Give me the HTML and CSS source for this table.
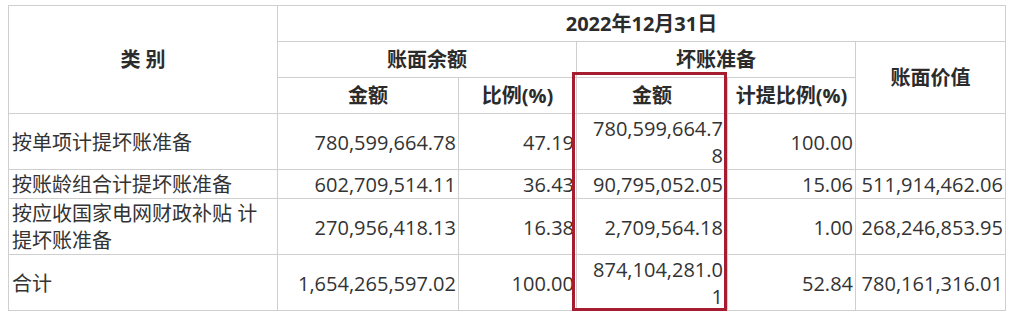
FILE: index.html
```html
<!DOCTYPE html>
<html lang="zh-CN">
<head>
    <meta charset="UTF-8">
    <meta name="viewport" content="width=device-width, initial-scale=1.0">
    <title>坏账准备</title>
    <link rel="stylesheet" href="styles.css">
</head>
<body>
    <div class="sheet">
        <table class="report">
            <colgroup>
                <col class="c-name">
                <col class="c-amt">
                <col class="c-pct">
                <col class="c-bad">
                <col class="c-rate">
                <col class="c-book">
            </colgroup>
            <thead>
                <tr>
                    <th rowspan="3">类 别</th>
                    <th colspan="5">2022年12月31日</th>
                </tr>
                <tr>
                    <th colspan="2">账面余额</th>
                    <th colspan="2">坏账准备</th>
                    <th rowspan="2">账面价值</th>
                </tr>
                <tr>
                    <th>金额</th>
                    <th>比例(%)</th>
                    <th>金额</th>
                    <th>计提比例(%)</th>
                </tr>
            </thead>
            <tbody>
                <tr>
                    <td class="name">按单项计提坏账准备</td>
                    <td>780,599,664.78</td>
                    <td>47.19</td>
                    <td class="bad">780,599,664.78</td>
                    <td>100.00</td>
                    <td></td>
                </tr>
                <tr>
                    <td class="name">按账龄组合计提坏账准备</td>
                    <td>602,709,514.11</td>
                    <td>36.43</td>
                    <td class="bad">90,795,052.05</td>
                    <td>15.06</td>
                    <td>511,914,462.06</td>
                </tr>
                <tr>
                    <td class="name">按应收国家电网财政补贴 计提坏账准备</td>
                    <td>270,956,418.13</td>
                    <td>16.38</td>
                    <td class="bad">2,709,564.18</td>
                    <td>1.00</td>
                    <td>268,246,853.95</td>
                </tr>
                <tr>
                    <td class="name">合计</td>
                    <td>1,654,265,597.02</td>
                    <td>100.00</td>
                    <td class="bad">874,104,281.01</td>
                    <td>52.84</td>
                    <td>780,161,316.01</td>
                </tr>
            </tbody>
        </table>
        <div class="mark"></div>
    </div>
</body>
</html>
```

FILE: styles.css
```css
body {
    margin: 0;
    background: #fff;
    color: #333;
    font-family: "Open Sans", "Noto Sans CJK SC", sans-serif;
    font-size: 20px;
}
.sheet {
    position: relative;
    margin: 5px 0 0 8px;
    width: 997px;
}
.report {
    width: 997px;
    border-collapse: collapse;
    table-layout: fixed;
}
.c-name { width: 269px; }
.c-amt { width: 181px; }
.c-pct { width: 118px; }
.c-bad { width: 151px; }
.c-rate { width: 128px; }
.c-book { width: 150px; }
th, td {
    border: 1px solid #cfcfcf;
    line-height: 27px;
    vertical-align: middle;
}
th {
    padding: 4px 2px;
    font-weight: bold;
    text-align: center;
    color: #2b2b2b;
}
td {
    padding: 1px 2px 0 3px;
    text-align: right;
    white-space: nowrap;
}
td.name {
    text-align: left;
    white-space: normal;
}
td.bad {
    padding-left: 14px;
    padding-right: 4px;
    white-space: normal;
    word-break: break-all;
}
.mark {
    position: absolute;
    left: 564px;
    top: 67px;
    width: 149px;
    height: 233px;
    border: 3px solid #a61d2f;
}
```
